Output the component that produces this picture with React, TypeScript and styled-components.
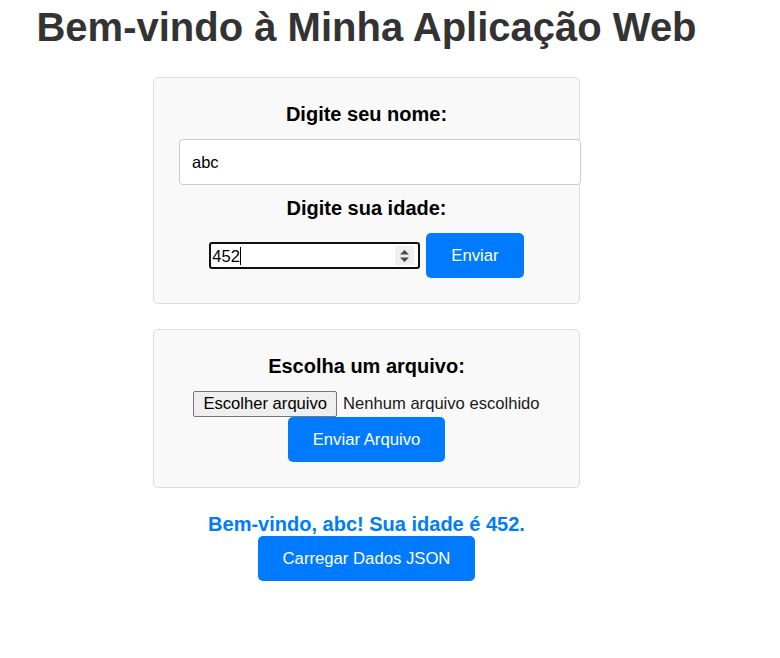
import React from "react";
import styled, { createGlobalStyle } from "styled-components";

const GlobalStyle = createGlobalStyle`
  html, body {
    margin: 0;
    padding: 0;
    background: #ffffff;
    font-family: "Liberation Sans", Arial, sans-serif;
  }
  * { box-sizing: border-box; }
`;

const Page = styled.div`
  width: 733px;
  padding-top: 4px;
  display: flex;
  flex-direction: column;
  align-items: center;
  text-align: center;
`;

const Title = styled.h1`
  margin: 0 0 27px;
  font-size: 40px;
  line-height: 46px;
  font-weight: bold;
  color: #333333;
`;

const Card = styled.section`
  width: 427px;
  padding: 25px;
  margin-bottom: 25px;
  background: #f9f9f9;
  border: 1px solid #dddddd;
  border-radius: 5px;
  display: flex;
  flex-direction: column;
  align-items: center;
`;

const Label = styled.label<{ $gap?: number }>`
  display: block;
  font-size: 20px;
  line-height: 23px;
  font-weight: bold;
  color: #000000;
  margin-bottom: ${(p) => p.$gap ?? 13}px;
`;

const TextInput = styled.input`
  box-sizing: content-box;
  align-self: flex-start;
  width: 376px;
  height: 20px;
  padding: 12px;
  margin-bottom: 12px;
  border: 1px solid #cccccc;
  border-radius: 4px;
  background: #ffffff;
  font-family: "Liberation Sans", Arial, sans-serif;
  font-size: 16.5px;
  color: #000000;
  outline: none;
`;

const Row = styled.div`
  display: flex;
  align-items: center;
  gap: 6px;
`;

const NumberField = styled.div`
  width: 211px;
  height: 27px;
  padding: 0 4px 0 1px;
  border: 2px solid #101010;
  border-radius: 3px;
  background: #ffffff;
  display: flex;
  align-items: center;
  font-size: 16.5px;
  color: #000000;
`;

const NumberValue = styled.span`
  line-height: 18px;
`;

const Caret = styled.span`
  width: 1px;
  height: 18px;
  background: #000000;
`;

const Spacer = styled.span`
  flex: 1;
`;

const SpinBox = styled.span`
  width: 19px;
  height: 19px;
  background: #efefef;
  display: flex;
  align-items: center;
  justify-content: center;
`;

const Button = styled.button`
  padding: 13px 25px;
  border: none;
  border-radius: 5px;
  background: #007bff;
  color: #ffffff;
  font-family: "Liberation Sans", Arial, sans-serif;
  font-size: 16.7px;
  line-height: 19px;
  cursor: pointer;
`;

const FileRow = styled.div`
  display: flex;
  align-items: center;
  gap: 6px;
  font-size: 16.6px;
  color: #1a1a1a;
`;

const FileButton = styled.span`
  display: inline-block;
  padding: 3px 9px 3px 9px;
  height: 26px;
  line-height: 18px;
  background: #efefef;
  border: 1px solid #767676;
  border-radius: 2px;
  color: #000000;
`;

const FileName = styled.span`
  line-height: 18px;
`;

const Message = styled.p`
  margin: 0;
  font-size: 20px;
  line-height: 23px;
  font-weight: bold;
  color: #007bff;
`;

const Spinner = () => (
  <svg width="11" height="14" viewBox="0 0 11 14">
    <path d="M5.5 1 L10 5.5 L1 5.5 Z" fill="#4a4a4a" />
    <path d="M5.5 13 L10 8.5 L1 8.5 Z" fill="#4a4a4a" />
  </svg>
);

export default function App() {
  return (
    <>
      <GlobalStyle />
      <Page>
        <Title>Bem-vindo à Minha Aplicação Web</Title>

        <Card>
          <Label htmlFor="nome">Digite seu nome:</Label>
          <TextInput id="nome" type="text" defaultValue="abc" />
          <Label htmlFor="idade">Digite sua idade:</Label>
          <Row>
            <NumberField id="idade">
              <NumberValue>452</NumberValue>
              <Caret />
              <Spacer />
              <SpinBox>
                <Spinner />
              </SpinBox>
            </NumberField>
            <Button>Enviar</Button>
          </Row>
        </Card>

        <Card>
          <Label>Escolha um arquivo:</Label>
          <FileRow>
            <FileButton>Escolher arquivo</FileButton>
            <FileName>Nenhum arquivo escolhido</FileName>
          </FileRow>
          <Button>Enviar Arquivo</Button>
        </Card>

        <Message>Bem-vindo, abc! Sua idade é 452.</Message>
        <Button>Carregar Dados JSON</Button>
      </Page>
    </>
  );
}
